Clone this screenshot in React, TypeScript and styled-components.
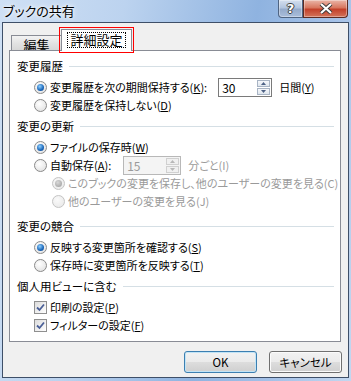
import React from "react"
import styled, { createGlobalStyle } from "styled-components"

const GlobalStyle = createGlobalStyle`
  body {
    margin: 0;
    font-family: "Noto Sans CJK JP", "Noto Sans", sans-serif;
    font-size: 11px;
    color: #000;
    font-feature-settings: "palt" 1;
  }
`

const Window = styled.div`
  width: 351px;
  height: 381px;
  box-sizing: border-box;
  display: flex;
  flex-direction: column;
  background: linear-gradient(100deg, #cfe0f4 0%, #bcd3ef 30%, #8fb3e0 62%, #a3c0e7 80%, #c3d7f0 100%);
  overflow: hidden;
`

const TitleBar = styled.div`
  height: 22px;
  display: flex;
  align-items: flex-start;
  padding-left: 3px;
  flex-shrink: 0;
`

const Title = styled.div`
  line-height: 22px;
  font-size: 13px;
  text-shadow: 0 0 6px #fff, 0 0 3px #fff;
`

const CaptionButton = styled.div<{ $close?: boolean }>`
  width: ${(p) => (p.$close ? 45 : 25)}px;
  height: 18px;
  box-sizing: border-box;
  display: flex;
  align-items: center;
  justify-content: center;
  border: 1px solid ${(p) => (p.$close ? "#5d2b22" : "#4f6482")};
  border-top: none;
  border-radius: ${(p) => (p.$close ? "0 0 4px 0" : "0 0 0 4px")};
  background: ${(p) =>
    p.$close
      ? "linear-gradient(#eab6a8 0%, #d8775f 45%, #c3412a 55%, #d3745b 100%)"
      : "linear-gradient(#d4dfee 0%, #b3c5de 45%, #95abcb 55%, #a9bddb 100%)"};
  box-shadow: inset 0 0 0 1px rgba(255, 255, 255, 0.35);
  color: #fff;
  font-family: "DejaVu Sans", sans-serif;
  font-weight: bold;
  font-size: 13px;
  text-shadow: 0 0 1px #333, 1px 0 0 #444, -1px 0 0 #444, 0 1px 0 #444, 0 -1px 0 #444;
`

const CaptionButtons = styled.div`
  margin-left: auto;
  margin-right: 3px;
  display: flex;
`

const Client = styled.div`
  flex: 1;
  margin: 0 2px 3px;
  border: 1px solid #3e4f68;
  background: #f0f0f0;
  display: flex;
  flex-direction: column;
`

const TabStrip = styled.div`
  display: flex;
  align-items: flex-end;
  padding: 6px 0 0 8px;
`

const Tab = styled.div<{ $active?: boolean }>`
  box-sizing: border-box;
  display: flex;
  align-items: center;
  justify-content: center;
  border: 1px solid #898c95;
  border-bottom: none;
  font-size: 13px;
  ${(p) =>
    p.$active
      ? `
    width: 71px;
    height: 22px;
    background: #fff;
    position: relative;
    z-index: 2;
    outline: 1px solid #f00;
    outline-offset: 1px;
    padding-bottom: 2px;
  `
      : `
    width: 50px;
    height: 16px;
    background: linear-gradient(#f3f3f3, #e2e2e2 50%, #d6d6d6);
    border-right: none;
    padding-top: 1px;
  `}
`

const FocusLabel = styled.span`
  outline: 1px dotted #000;
  padding: 0 2px;
  line-height: 14px;
`

const Panel = styled.div`
  position: relative;
  z-index: 1;
  margin: -1px 7px 0 6px;
  height: 292px;
  box-sizing: border-box;
  border: 1px solid #898c95;
  background: #fff;
  padding: 6px 6px 0 7px;
`

const Section = styled.div<{ $top: number }>`
  margin-top: ${(p) => p.$top}px;
`

const Header = styled.div`
  height: 18px;
  display: flex;
  align-items: center;
  gap: 6px;
  margin-bottom: 3px;
  font-size: 11.5px;

  &::after {
    content: "";
    flex: 1;
    height: 1px;
    background: #d5dfe5;
  }
`

const Row = styled.div<{ $indent: number; $disabled?: boolean }>`
  height: 18px;
  display: flex;
  align-items: center;
  padding-left: ${(p) => p.$indent}px;
  color: ${(p) => (p.$disabled ? "#9a9a9a" : "#000")};
  white-space: nowrap;
`

const Label = styled.span<{ $muted?: boolean }>`
  margin-left: 3px;
  color: ${(p) => (p.$muted ? "#9a9a9a" : "inherit")};
`

const RadioMark = styled.span<{ $checked?: boolean; $disabled?: boolean }>`
  width: 13px;
  height: 13px;
  box-sizing: border-box;
  border-radius: 50%;
  border: 1px solid ${(p) => (p.$disabled ? "#c4c4c4" : "#8a8a8a")};
  background: ${(p) =>
    p.$disabled
      ? "radial-gradient(circle at 40% 35%, #fafafa, #e6e6e6)"
      : "radial-gradient(circle at 40% 35%, #ffffff, #dcdcdc)"};
  display: flex;
  align-items: center;
  justify-content: center;
  flex-shrink: 0;

  &::after {
    content: "";
    display: ${(p) => (p.$checked ? "block" : "none")};
    width: 7px;
    height: 7px;
    border-radius: 50%;
    background: ${(p) =>
      p.$disabled
        ? "radial-gradient(circle at 40% 35%, #d8d8d8, #9a9a9a)"
        : "radial-gradient(circle at 40% 35%, #8fd0ff, #1a66b8 60%, #0e3f86)"};
  }
`

const CheckMark = styled.span`
  width: 13px;
  height: 13px;
  box-sizing: border-box;
  border: 1px solid #8f8f8f;
  background: linear-gradient(135deg, #dcdcdc, #ffffff);
  display: flex;
  align-items: center;
  justify-content: center;
  flex-shrink: 0;
`

const SpinBox = styled.div<{ $width: number; $disabled?: boolean; $gap: number }>`
  width: ${(p) => p.$width}px;
  height: 19px;
  box-sizing: border-box;
  margin-left: ${(p) => p.$gap}px;
  margin-right: 4px;
  border: 1px solid ${(p) => (p.$disabled ? "#b8b8b8" : "#7a7a7a")};
  background: ${(p) => (p.$disabled ? "#f4f4f4" : "#fff")};
  display: flex;
  align-items: stretch;
  color: ${(p) => (p.$disabled ? "#9a9a9a" : "#000")};
  font-size: 12px;
`

const SpinValue = styled.span`
  flex: 1;
  padding-left: 3px;
  line-height: 17px;
`

const SpinButtons = styled.div`
  width: 13px;
  display: flex;
  flex-direction: column;
  padding: 1px 1px 1px 0;
  gap: 1px;
`

const SpinHalf = styled.div<{ $disabled?: boolean }>`
  flex: 1;
  border: 1px solid ${(p) => (p.$disabled ? "#d0d0d0" : "#a8b4c4")};
  background: ${(p) => (p.$disabled ? "#f0f0f0" : "linear-gradient(#f6f8fb, #dfe6ee)")};
  display: flex;
  align-items: center;
  justify-content: center;
`

const Buttons = styled.div`
  display: flex;
  justify-content: flex-end;
  gap: 12px;
  margin-top: 9px;
  padding-right: 6px;
`

const Button = styled.div<{ $default?: boolean }>`
  width: 73px;
  height: 22px;
  box-sizing: border-box;
  border-radius: 3px;
  border: 1px solid ${(p) => (p.$default ? "#3c7fb1" : "#707070")};
  box-shadow: inset 0 0 0 1px ${(p) => (p.$default ? "#c2e4f6" : "#fbfbfb")};
  background: linear-gradient(#f2f2f2 0%, #ebebeb 48%, #dddddd 52%, #cfcfcf 100%);
  display: flex;
  align-items: center;
  justify-content: center;
  font-size: 11.5px;
`

const Arrow = ({ up, color }: { up?: boolean; color: string }) => (
  <svg width="5" height="3" viewBox="0 0 5 3">
    <path d={up ? "M0 3 L2.5 0 L5 3 Z" : "M0 0 L2.5 3 L5 0 Z"} fill={color} />
  </svg>
)

const Spin = ({ value, width, gap, disabled }: { value: string; width: number; gap: number; disabled?: boolean }) => {
  const c = disabled ? "#b8b8b8" : "#4d6185"
  return (
    <SpinBox $width={width} $gap={gap} $disabled={disabled}>
      <SpinValue>{value}</SpinValue>
      <SpinButtons>
        <SpinHalf $disabled={disabled}>
          <Arrow up color={c} />
        </SpinHalf>
        <SpinHalf $disabled={disabled}>
          <Arrow color={c} />
        </SpinHalf>
      </SpinButtons>
    </SpinBox>
  )
}

const Check = () => (
  <CheckMark>
    <svg width="9" height="9" viewBox="0 0 9 9">
      <path d="M1 4.5 L3.5 7 L8 1.5" fill="none" stroke="#4a5f97" strokeWidth="1.8" />
    </svg>
  </CheckMark>
)

export default function App() {
  return (
    <>
      <GlobalStyle />
      <Window>
        <TitleBar>
          <Title>ブックの共有</Title>
          <CaptionButtons>
            <CaptionButton>?</CaptionButton>
            <CaptionButton $close>
              <svg width="14" height="11" viewBox="0 0 14 11">
                <path d="M2 1 L12 10 M12 1 L2 10" stroke="#3a3a3a" strokeWidth="4" />
                <path d="M2 1 L12 10 M12 1 L2 10" stroke="#fff" strokeWidth="2.2" />
              </svg>
            </CaptionButton>
          </CaptionButtons>
        </TitleBar>
        <Client>
          <TabStrip>
            <Tab>編集</Tab>
            <Tab $active>
              <FocusLabel>詳細設定</FocusLabel>
            </Tab>
          </TabStrip>
          <Panel>
            <Section $top={0}>
              <Header>変更履歴</Header>
              <Row $indent={17}>
                <RadioMark $checked />
                <Label>
                  変更履歴を次の期間保持する(<u>K</u>):
                </Label>
                <Spin value="30" width={54} gap={11} />
                <Label>
                  日間(<u>Y</u>)
                </Label>
              </Row>
              <Row $indent={17}>
                <RadioMark />
                <Label>
                  変更履歴を保持しない(<u>D</u>)
                </Label>
              </Row>
            </Section>
            <Section $top={3}>
              <Header>変更の更新</Header>
              <Row $indent={17}>
                <RadioMark $checked />
                <Label>
                  ファイルの保存時(<u>W</u>)
                </Label>
              </Row>
              <Row $indent={17}>
                <RadioMark />
                <Label>
                  自動保存(<u>A</u>):
                </Label>
                <Spin value="15" width={58} gap={12} disabled />
                <Label $muted>分ごと(I)</Label>
              </Row>
              <Row $indent={35} $disabled>
                <RadioMark $checked $disabled />
                <Label>このブックの変更を保存し、他のユーザーの変更を見る(C)</Label>
              </Row>
              <Row $indent={35} $disabled>
                <RadioMark $disabled />
                <Label>他のユーザーの変更を見る(J)</Label>
              </Row>
            </Section>
            <Section $top={7}>
              <Header>変更の競合</Header>
              <Row $indent={17}>
                <RadioMark $checked />
                <Label>
                  反映する変更箇所を確認する(<u>S</u>)
                </Label>
              </Row>
              <Row $indent={17}>
                <RadioMark />
                <Label>
                  保存時に変更箇所を反映する(<u>T</u>)
                </Label>
              </Row>
            </Section>
            <Section $top={3}>
              <Header>個人用ビューに含む</Header>
              <Row $indent={17}>
                <Check />
                <Label>
                  印刷の設定(<u>P</u>)
                </Label>
              </Row>
              <Row $indent={17}>
                <Check />
                <Label>
                  フィルターの設定(<u>F</u>)
                </Label>
              </Row>
            </Section>
          </Panel>
          <Buttons>
            <Button $default>OK</Button>
            <Button>キャンセル</Button>
          </Buttons>
        </Client>
      </Window>
    </>
  )
}
